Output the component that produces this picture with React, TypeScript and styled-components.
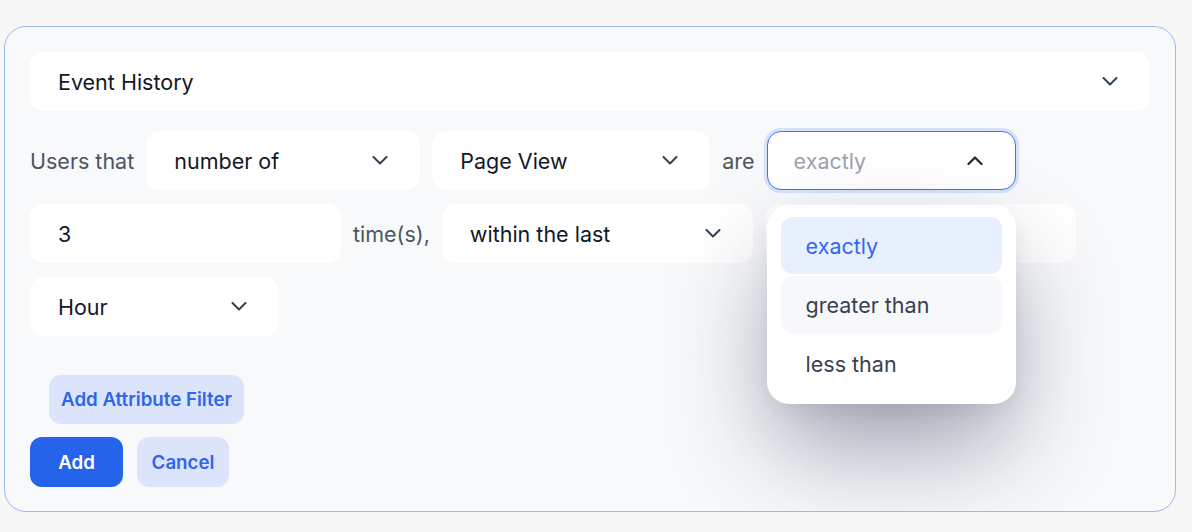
import React from "react";
import styled, { createGlobalStyle } from "styled-components";

const Global = createGlobalStyle`
  html, body { margin: 0; padding: 0; background: #f7f7f8; }
  body { font-family: Inter, "Noto Sans", sans-serif; -webkit-font-smoothing: antialiased; }
  * { box-sizing: border-box; }
`;

const Page = styled.div`
  width: 1192px;
  height: 532px;
  padding: 26px 16px 20px 4px;
  background: #f7f7f8;
`;

const Card = styled.div`
  border: 1px solid #9cb8f4;
  border-radius: 22px;
  background: #f8f9fb;
  padding: 25px 25px 24px 25px;
  display: flex;
  flex-direction: column;
  overflow: hidden;
`;

const SelectBox = styled.div<{ $w?: number; $h?: number; $focused?: boolean }>`
  position: relative;
  width: ${(p) => (p.$w ? `${p.$w}px` : "100%")};
  height: ${(p) => p.$h ?? 59}px;
  background: #ffffff;
  border-radius: 14px;
  display: flex;
  align-items: center;
  justify-content: space-between;
  padding: 0 32px 0 ${(p) => (p.$focused ? 26 : 28)}px;
  font-size: 21.5px;
  color: #111827;
  flex-shrink: 0;
  border: ${(p) => (p.$focused ? "1.5px solid #3f74ee" : "none")};
  box-shadow: ${(p) => (p.$focused ? "0 0 0 3px rgba(96, 140, 245, 0.22)" : "none")};
`;

const Value = styled.span<{ $placeholder?: boolean }>`
  color: ${(p) => (p.$placeholder ? "#9ca3af" : "#111827")};
`;

const Label = styled.span`
  font-size: 21.5px;
  color: #4b5563;
  white-space: nowrap;
`;

const Rows = styled.div`
  display: flex;
  flex-wrap: wrap;
  align-items: center;
  column-gap: 12px;
  row-gap: 14px;
  margin-top: 20px;
  width: 1120px;
`;

const Anchor = styled.div`
  position: relative;
  z-index: 5;
`;

const Menu = styled.div`
  position: absolute;
  top: 74px;
  left: 0;
  width: 249px;
  background: #ffffff;
  border-radius: 22px;
  padding: 12px 14px 12px 14px;
  display: flex;
  flex-direction: column;
  gap: 2px;
  box-shadow: 0 50px 100px -8px rgba(25, 35, 65, 0.42), 0 8px 20px rgba(25, 35, 65, 0.06);
`;

const Option = styled.div<{ $state?: "selected" | "hover" }>`
  height: 57px;
  border-radius: 12px;
  display: flex;
  align-items: center;
  padding-left: 25px;
  font-size: 21.5px;
  background: ${(p) =>
    p.$state === "selected" ? "#e8effd" : p.$state === "hover" ? "#f7f8fb" : "transparent"};
  color: ${(p) => (p.$state === "selected" ? "#3668ee" : "#374151")};
`;

const Actions = styled.div`
  display: flex;
  flex-direction: column;
  align-items: flex-start;
  margin-top: 39px;
  gap: 13px;
`;

const Button = styled.button<{ $variant: "primary" | "soft"; $w: number; $h?: number }>`
  width: ${(p) => p.$w}px;
  height: ${(p) => p.$h ?? 50}px;
  border: none;
  border-radius: 12px;
  font-family: Inter, "Noto Sans", sans-serif;
  font-weight: 600;
  font-size: 18.7px;
  padding: 0;
  background: ${(p) => (p.$variant === "primary" ? "#2563eb" : "#dbe4fb")};
  color: ${(p) => (p.$variant === "primary" ? "#ffffff" : "#2f66eb")};
`;

const FilterButton = styled(Button)`
  margin-left: 19px;
`;

const ButtonRow = styled.div`
  display: flex;
  gap: 14px;
`;

const Chevron = ({ up }: { up?: boolean }) => (
  <svg width="16" height="9" viewBox="0 0 16 9" fill="none">
    <path
      d={up ? "M1.5 8 L8 1.5 L14.5 8" : "M1.5 1 L8 7.5 L14.5 1"}
      stroke={up ? "#1f2937" : "#334155"}
      strokeWidth={up ? 2.2 : 2}
      strokeLinecap="round"
      strokeLinejoin="round"
    />
  </svg>
);

const Select = ({
  value,
  w,
  focused,
  placeholder,
  up,
}: {
  value: string;
  w?: number;
  focused?: boolean;
  placeholder?: boolean;
  up?: boolean;
}) => (
  <SelectBox $w={w} $focused={focused}>
    <Value $placeholder={placeholder}>{value}</Value>
    <Chevron up={up} />
  </SelectBox>
);

const InputBox = styled(SelectBox)``;

export default function App() {
  return (
    <>
      <Global />
      <Page>
        <Card>
          <Select value="Event History" />
          <Rows>
            <Label>Users that</Label>
            <Select value="number of" w={274} />
            <Select value="Page View" w={278} />
            <Label>are</Label>
            <Anchor>
              <Select value="exactly" w={249} focused placeholder up />
              <Menu>
                <Option $state="selected">exactly</Option>
                <Option $state="hover">greater than</Option>
                <Option>less than</Option>
              </Menu>
            </Anchor>
            <InputBox $w={311}>
              <Value>3</Value>
            </InputBox>
            <Label>time(s),</Label>
            <Select value="within the last" w={311} />
            <SelectBox $w={311} />
            <Select value="Hour" w={249} />
          </Rows>
          <Actions>
            <FilterButton $variant="soft" $w={195} $h={49}>
              Add Attribute Filter
            </FilterButton>
            <ButtonRow>
              <Button $variant="primary" $w={93}>
                Add
              </Button>
              <Button $variant="soft" $w={92}>
                Cancel
              </Button>
            </ButtonRow>
          </Actions>
        </Card>
      </Page>
    </>
  );
}
